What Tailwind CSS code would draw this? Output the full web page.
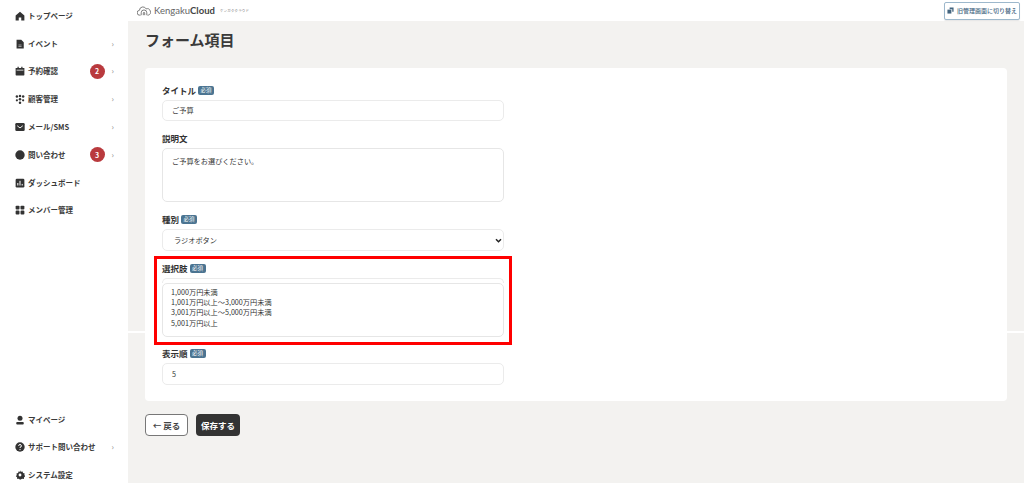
<!DOCTYPE html>
<html lang="ja">
<head>
    <meta charset="UTF-8">
    <title>フォーム項目</title>
    <script src="https://cdn.jsdelivr.net/npm/@tailwindcss/browser@4"></script>
</head>
<body class="relative h-[483px] w-[1024px] overflow-hidden bg-[#f3f2f0] font-['Noto_Sans_CJK_JP','Noto_Sans',sans-serif] text-[#3a3a3a]">
    <!-- seam in the captured page -->
    <div class="absolute left-0 right-0 top-[331px] h-[2px] bg-white"></div>

    <div class="relative flex h-full">
        <!-- sidebar -->
        <aside class="flex h-full w-[128px] shrink-0 flex-col justify-between bg-white pt-[2px] pl-[15px] pr-[14px] text-[7.500px] font-bold leading-[12px]">
            <nav class="flex flex-col">
                <a class="flex h-[27.8px] items-center gap-[3px]">
                    <svg class="size-[10px]" viewBox="0 0 16 16" fill="#333"><path d="M8 1 1 7v8h5v-4.500h4V15h5V7z"/></svg>
                    <span>トップページ</span>
                </a>
                <a class="flex h-[27.8px] items-center gap-[3px]">
                    <svg class="size-[10px]" viewBox="0 0 16 16" fill="#333"><path d="M2.500 1H10l4 4v10H2.500zM5.500 9v1h5V9zm0 2.500v1h5v-1z" fill-rule="evenodd"/></svg>
                    <span class="flex-1">イベント</span>
                    <span class="text-[8px] font-normal text-[#888]">›</span>
                </a>
                <a class="flex h-[27.8px] items-center gap-[3px]">
                    <svg class="size-[10px]" viewBox="0 0 16 16" fill="#333"><path d="M4 1h2v2h4V1h2v2h3v11a1 1 0 0 1-1 1H2a1 1 0 0 1-1-1V3h3zM2.500 6v1h11V6z" fill-rule="evenodd"/></svg>
                    <span class="flex-1">予約確認</span>
                    <span class="mr-[4px] flex size-[15px] items-center justify-center rounded-full bg-[#b93a3e] text-[7px] text-white">2</span>
                    <span class="text-[8px] font-normal text-[#888]">›</span>
                </a>
                <a class="flex h-[27.8px] items-center gap-[3px]">
                    <svg class="size-[10px]" viewBox="0 0 16 16" fill="#333"><circle cx="3" cy="4" r="2"/><circle cx="8" cy="3" r="2"/><circle cx="13" cy="4" r="2"/><circle cx="3" cy="10" r="1.800"/><circle cx="8" cy="8.500" r="2"/><circle cx="13" cy="10" r="1.800"/><circle cx="8" cy="14" r="2"/></svg>
                    <span class="flex-1">顧客管理</span>
                    <span class="text-[8px] font-normal text-[#888]">›</span>
                </a>
                <a class="flex h-[27.8px] items-center gap-[3px]">
                    <svg class="size-[10px]" viewBox="0 0 16 16"><rect x="0.500" y="1.500" width="15" height="13" rx="2" fill="#333"/><path d="M3.500 6 8 9.500 12.500 6" fill="none" stroke="#fff" stroke-width="1.500"/></svg>
                    <span class="flex-1">メール/SMS</span>
                    <span class="text-[8px] font-normal text-[#888]">›</span>
                </a>
                <a class="flex h-[27.8px] items-center gap-[3px]">
                    <svg class="size-[10px]" viewBox="0 0 16 16" fill="#333"><circle cx="8" cy="8" r="7.500"/></svg>
                    <span class="flex-1">問い合わせ</span>
                    <span class="mr-[4px] flex size-[15px] items-center justify-center rounded-full bg-[#b93a3e] text-[7px] text-white">3</span>
                    <span class="text-[8px] font-normal text-[#888]">›</span>
                </a>
                <a class="flex h-[27.8px] items-center gap-[3px]">
                    <svg class="size-[10px]" viewBox="0 0 16 16"><rect x="1" y="1" width="14" height="14" rx="2" fill="#333"/><path d="M4.500 12V8M8 12V4.500M11.500 12V9.500" stroke="#fff" stroke-width="1.600"/></svg>
                    <span>ダッシュボード</span>
                </a>
                <a class="flex h-[27.8px] items-center gap-[3px]">
                    <svg class="size-[10px]" viewBox="0 0 16 16" fill="#333"><rect x="1" y="1" width="6.200" height="6.200" rx="1.500"/><rect x="8.800" y="1" width="6.200" height="6.200" rx="1.500"/><rect x="1" y="8.800" width="6.200" height="6.200" rx="1.500"/><rect x="8.800" y="8.800" width="6.200" height="6.200" rx="1.500"/></svg>
                    <span>メンバー管理</span>
                </a>
            </nav>
            <nav class="-mb-[6px] flex flex-col">
                <a class="flex h-[27.8px] items-center gap-[3px]">
                    <svg class="size-[10px]" viewBox="0 0 16 16" fill="#333"><circle cx="8" cy="5" r="4"/><rect x="2" y="11" width="12" height="4" rx="1.500"/></svg>
                    <span>マイページ</span>
                </a>
                <a class="flex h-[27.8px] items-center gap-[3px]">
                    <svg class="size-[10px]" viewBox="0 0 16 16"><circle cx="8" cy="8" r="7.500" fill="#333"/><path d="M5.800 6.200A2.200 2.200 0 1 1 8 8.400V9.500" fill="none" stroke="#fff" stroke-width="1.600"/><circle cx="8" cy="12" r="1" fill="#fff"/></svg>
                    <span class="flex-1">サポート問い合わせ</span>
                    <span class="text-[8px] font-normal text-[#888]">›</span>
                </a>
                <a class="flex h-[27.8px] items-center gap-[3px]">
                    <svg class="size-[10px]" viewBox="0 0 16 16"><path d="M8 .5l1.500 2.300 2.700-.6.600 2.700 2.700.6-.6 2.500 1.600 2-2 1.500-.3 2.700-2.700-.1L8 15.500l-1.700-1.400-2.700.1-.3-2.700-2-1.500 1.600-2-.6-2.500 2.700-.6.600-2.700 2.700.6z" fill="#333"/><circle cx="8" cy="8" r="2.300" fill="#fff"/></svg>
                    <span>システム設定</span>
                </a>
            </nav>
        </aside>

        <div class="flex min-w-0 flex-1 flex-col">
            <!-- header -->
            <header class="flex h-[21px] items-center justify-between bg-white pl-[9px] pr-[4px]">
                <div class="flex items-center gap-[3px] text-[#666]">
                    <svg class="h-[10px] w-[14px]" viewBox="0 0 20 14" fill="none" stroke="#666" stroke-width="1.200"><path d="M5 13H4a3.500 3.500 0 0 1-.5-7A5 5 0 0 1 13 4a4.500 4.500 0 0 1 3 9h-1"/><path d="M6 13V9.500a4 4 0 0 1 8 0V13M9 13v-3a1 1 0 0 1 2 0v3"/></svg>
                    <span class="font-['Lato',sans-serif] text-[9.500px] leading-none">Kengaku<b class="font-bold text-[#444]">Cloud</b></span>
                    <span class="ml-[2px] text-[3.500px] tracking-[0.2px] text-[#777]">ケンガククラウド</span>
                </div>
                <button class="flex h-[18px] w-[76px] items-center justify-center gap-[3px] rounded-[2px] border border-[#9db8cc] bg-white text-[6px] font-medium text-[#44657f] shadow-[0_1px_1px_rgba(0,0,0,0.1)]">
                    <svg class="size-[7px]" viewBox="0 0 16 16" fill="#44657f"><path d="M6 1h9v10h-3V5H6z"/><path d="M1 6h9v9H1z"/></svg>
                    旧管理画面に切り替え
                </button>
            </header>

            <main class="flex flex-1 flex-col pl-[17px] pr-[17px]">
                <h1 class="mt-[8px] h-[39px] text-[15px] font-bold leading-[22px] text-[#3a3a3a]">フォーム項目</h1>

                <section class="h-[333px] rounded-[4px] bg-white pl-[17px] pt-[16px] text-[7.200px] text-[#333]">
                    <div class="w-[342px]">
                        <div class="flex h-[12px] items-center gap-[2px] text-[8.500px] font-bold">タイトル<span class="flex h-[9px] w-[16px] items-center justify-center rounded-[2px] bg-[#4b7491] text-[5.500px] font-normal text-white">必須</span></div>
                        <div class="mt-[4px] flex h-[21px] items-center rounded-[5px] border border-[#ebebeb] pl-[9px]">ご予算</div>

                        <div class="mt-[11px] flex h-[12px] items-center text-[8.500px] font-bold">説明文</div>
                        <div class="mt-[4px] h-[54px] rounded-[5px] border border-[#e6e6e6] pl-[9px] pt-[7px] leading-[11px]">ご予算をお選びください。</div>

                        <div class="mt-[11px] flex h-[12px] items-center gap-[2px] text-[8.500px] font-bold">種別<span class="flex h-[9px] w-[16px] items-center justify-center rounded-[2px] bg-[#4b7491] text-[5.500px] font-normal text-white">必須</span></div>
                        <div class="mt-[4px] flex h-[22px] items-center justify-between rounded-[5px] border border-[#ebebeb] pl-[11px] pr-[1px]">
                            <span>ラジオボタン</span>
                            <svg class="h-[5px] w-[7px]" viewBox="0 0 8 6" fill="none" stroke="#222" stroke-width="1.800"><path d="M1 1.500 4 4.500 7 1.500"/></svg>
                        </div>

                        <div class="mt-[11px] flex h-[12px] items-center gap-[2px] text-[8.500px] font-bold">選択肢<span class="flex h-[9px] w-[16px] items-center justify-center rounded-[2px] bg-[#4b7491] text-[5.500px] font-normal text-white">必須</span></div>
                        <div class="mt-[4px] h-[5px] rounded-t-[5px] border border-b-0 border-[#ebebeb]"></div>
                        <div class="h-[54px] rounded-[5px] border border-[#e6e6e6] pl-[8px] pt-[3px] leading-[10.200px]">
                            1,000万円未満<br>1,001万円以上～3,000万円未満<br>3,001万円以上～5,000万円未満<br>5,001万円以上
                        </div>

                        <div class="mt-[10px] flex h-[12px] items-center gap-[2px] text-[8.500px] font-bold">表示順<span class="flex h-[9px] w-[16px] items-center justify-center rounded-[2px] bg-[#4b7491] text-[5.500px] font-normal text-white">必須</span></div>
                        <div class="mt-[4px] flex h-[22px] items-center rounded-[5px] border border-[#ebebeb] pl-[9px]">5</div>
                    </div>
                </section>

                <div class="mt-[13px] flex gap-[8px] text-[8.500px] font-bold">
                    <button class="h-[22px] w-[43px] rounded-[4px] border border-[#777] bg-white text-[#444]">← 戻る</button>
                    <button class="h-[22px] w-[44px] rounded-[4px] bg-[#333] text-white">保存する</button>
                </div>
            </main>
        </div>
    </div>

    <!-- annotation box over the choices field -->
    <div class="absolute left-[154px] top-[256px] h-[89px] w-[358px] border-[3px] border-[#f00]"></div>
</body>
</html>
